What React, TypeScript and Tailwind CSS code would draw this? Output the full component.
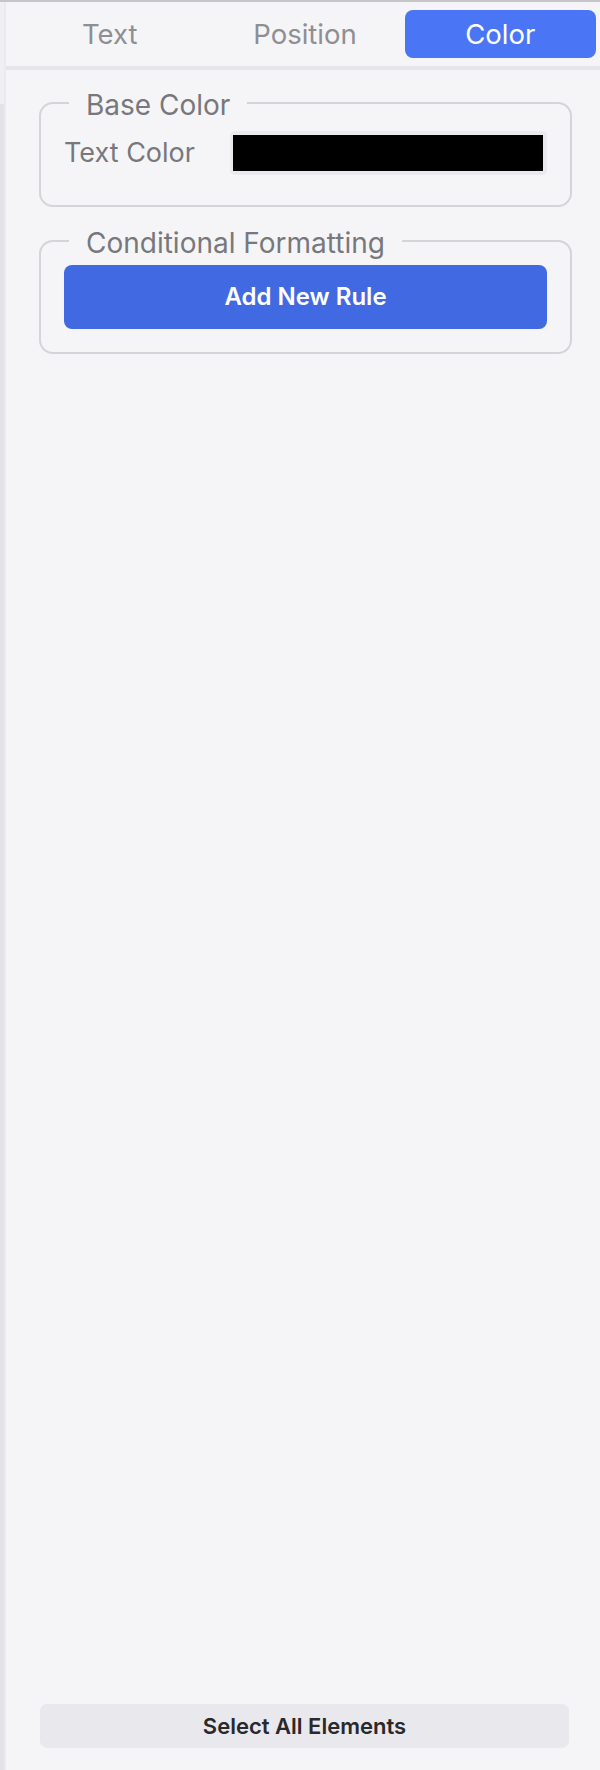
import React, { useState } from 'react';

const tabs = ['Text', 'Position', 'Color'];

const App: React.FC = () => {
  const [active, setActive] = useState('Color');

  return (
    <div className="w-[600px] h-[1770px] flex flex-col bg-[#f5f5f7] border-t-2 border-[#c5c5ca] font-['Inter','Liberation_Sans',sans-serif] overflow-hidden">
      <div className="flex flex-1 min-h-0">
        {/* left edge of the neighbouring pane */}
        <div className="w-[4px] flex flex-col">
          <div className="h-[102px] bg-[#f0f0f3]"></div>
          <div className="flex-1 bg-[#e2e2e7]"></div>
        </div>
        <div className="w-[2px] bg-[#ebebef]"></div>

        {/* Sidebar panel */}
        <div className="flex-1 flex flex-col">
          <div className="grid grid-cols-3 gap-[4px] pl-[8px] pr-[4px] pt-[8px] pb-[8px]">
            {tabs.map((t) => (
              <button
                key={t}
                onClick={() => setActive(t)}
                className={`h-[48px] rounded-[8px] text-[27.5px] leading-none pt-[2px] ${
                  active === t ? 'bg-[#4a76f6] text-white' : 'text-[#8e8e93]'
                }`}
              >
                {t}
              </button>
            ))}
          </div>
          <div className="h-[4px] bg-[#e5e5ea]"></div>

          <div className="ml-[33px] mr-[28px] mt-[15px] flex flex-col gap-[16px]">
            <fieldset className="border-2 border-[#d4d4d9] rounded-[14px] px-[23px] pt-[10px] pb-[30px]">
              <legend className="ml-[5px] px-[17px] text-[28px] leading-[32px] pt-[4px] text-[#78787c]">Base Color</legend>
              <div className="flex items-center">
                <span className="w-[166px] text-[27px] text-[#78787c]">Text Color</span>
                <div className="flex-1 bg-[#e9e9ee] rounded-[5px] pl-[3px] pr-[4px] py-[4px]">
                  <div className="h-[36px] bg-black"></div>
                </div>
              </div>
            </fieldset>

            <fieldset className="border-2 border-[#d4d4d9] rounded-[14px] px-[23px] pt-[6px] pb-[23px]">
              <legend className="ml-[5px] px-[17px] text-[28px] leading-[32px] pt-[4px] text-[#78787c]">Conditional Formatting</legend>
              <button className="w-full h-[64px] rounded-[8px] bg-[#4169e1] text-white text-[24px] font-semibold">
                Add New Rule
              </button>
            </fieldset>
          </div>

          <div className="mt-auto ml-[34px] mr-[31px] mb-[22px]">
            <button className="w-full h-[44px] rounded-[7px] bg-[#e8e8ed] text-[#29292b] text-[22px] font-semibold">
              Select All Elements
            </button>
          </div>
        </div>
      </div>
    </div>
  );
};

export default App;
